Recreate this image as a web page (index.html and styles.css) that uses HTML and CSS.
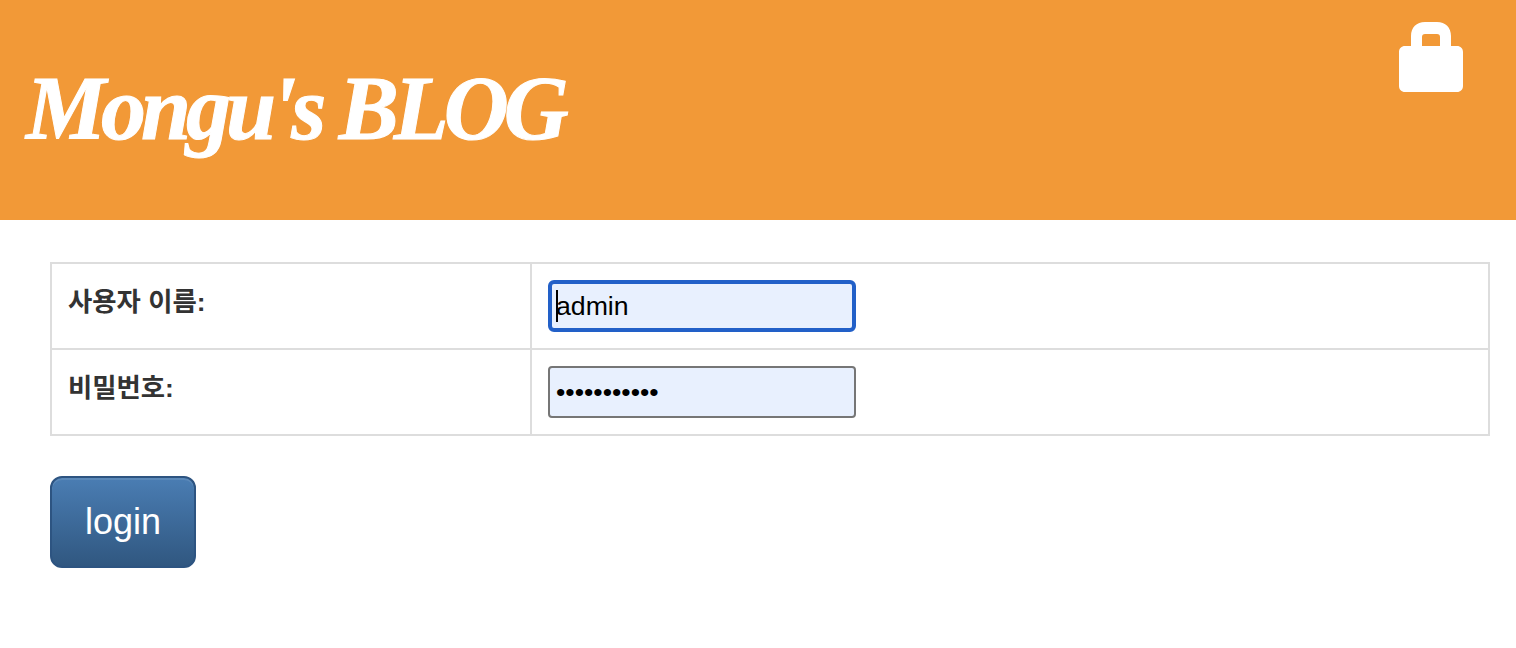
FILE: index.html
```html
<!DOCTYPE html>
<html lang="ko">
<head>
    <meta charset="UTF-8">
    <meta name="viewport" content="width=device-width, initial-scale=1.0">
    <title>Mongu's BLOG</title>
    <link rel="stylesheet" href="styles.css">
</head>
<body>
    <header class="site-header">
        <h1 class="site-title">Mongu's BLOG</h1>
        <a class="login-link" href="#" aria-label="login">
            <svg class="lock-icon" width="64" height="70" viewBox="0 0 64 70">
                <path fill="#fff" fill-rule="evenodd" d="M12 24V14C12 5.500 17.500 0 26 0H38C46.500 0 52 5.500 52 14V24H58C61.500 24 64 26.500 64 30V64C64 67.500 61.500 70 58 70H6C2.500 70 0 67.500 0 64V30C0 26.500 2.500 24 6 24ZM23 24H41V15C41 13 40 12 38 12H26C24 12 23 13 23 15Z"/>
            </svg>
        </a>
    </header>

    <main class="content">
        <form class="login-form">
            <table class="form-table">
                <tr>
                    <th><label for="username">사용자 이름:</label></th>
                    <td>
                        <span class="field-wrap has-caret">
                            <input class="field field-focus" type="text" id="username" value="admin">
                        </span>
                    </td>
                </tr>
                <tr>
                    <th><label for="password">비밀번호:</label></th>
                    <td>
                        <span class="field-wrap">
                            <input class="field" type="password" id="password" value="12345678901">
                        </span>
                    </td>
                </tr>
            </table>
            <button class="login-btn" type="submit">login</button>
        </form>
    </main>
</body>
</html>
```

FILE: styles.css
```css
body {
    margin: 0;
    font-family: "Liberation Sans", Arial, sans-serif;
    background-color: #fff;
}
.site-header {
    display: flex;
    justify-content: space-between;
    align-items: flex-start;
    height: 220px;
    padding: 22px 53px 0 26px;
    box-sizing: border-box;
    background-color: #f29937;
}
.site-title {
    margin: 37px 0 0;
    font-family: "Liberation Serif", serif;
    font-style: italic;
    font-weight: bold;
    font-size: 90px;
    line-height: 100px;
    letter-spacing: -5px;
    -webkit-text-stroke: 1px #fff;
    color: #fff;
}
.login-link {
    display: block;
    line-height: 0;
}
.content {
    padding: 42px 26px 0 50px;
}
.form-table {
    width: 100%;
    border-collapse: collapse;
    table-layout: fixed;
}
.form-table th, .form-table td {
    padding: 16px;
    border: 2px solid #ddd;
    text-align: left;
    vertical-align: top;
}
.form-table th {
    width: 446px;
    font-family: "Liberation Sans", "Noto Sans CJK KR", sans-serif;
    font-size: 26.4px;
    line-height: 44px;
    font-weight: bold;
    color: #333;
}
.field-wrap {
    position: relative;
    display: block;
    width: 308px;
    height: 52px;
}
.field {
    display: block;
    width: 308px;
    height: 52px;
    padding: 0 6px;
    box-sizing: border-box;
    border: 2px solid #767676;
    border-radius: 4px;
    outline: none;
    background-color: #e8f0fe;
    font-family: "Liberation Sans", Arial, sans-serif;
    font-size: 26.67px;
    color: #000;
}
.field-focus {
    border: 4px solid #2260c8;
    border-radius: 6px;
    padding: 0 4px;
}
/* text caret, the real one blinks */
.has-caret::after {
    content: "";
    position: absolute;
    left: 8px;
    top: 10px;
    width: 2px;
    height: 32px;
    background-color: #000;
}
.login-btn {
    display: block;
    width: 146px;
    height: 92px;
    margin-top: 40px;
    border: 2px solid #2d5481;
    border-radius: 12px;
    background: linear-gradient(to bottom, #4a7db3, #305780);
    box-shadow: inset 0 2px 0 rgba(255,255,255,0.1);
    font-family: "Liberation Sans", Arial, sans-serif;
    font-size: 36px;
    color: #fff;
    cursor: pointer;
}
```
